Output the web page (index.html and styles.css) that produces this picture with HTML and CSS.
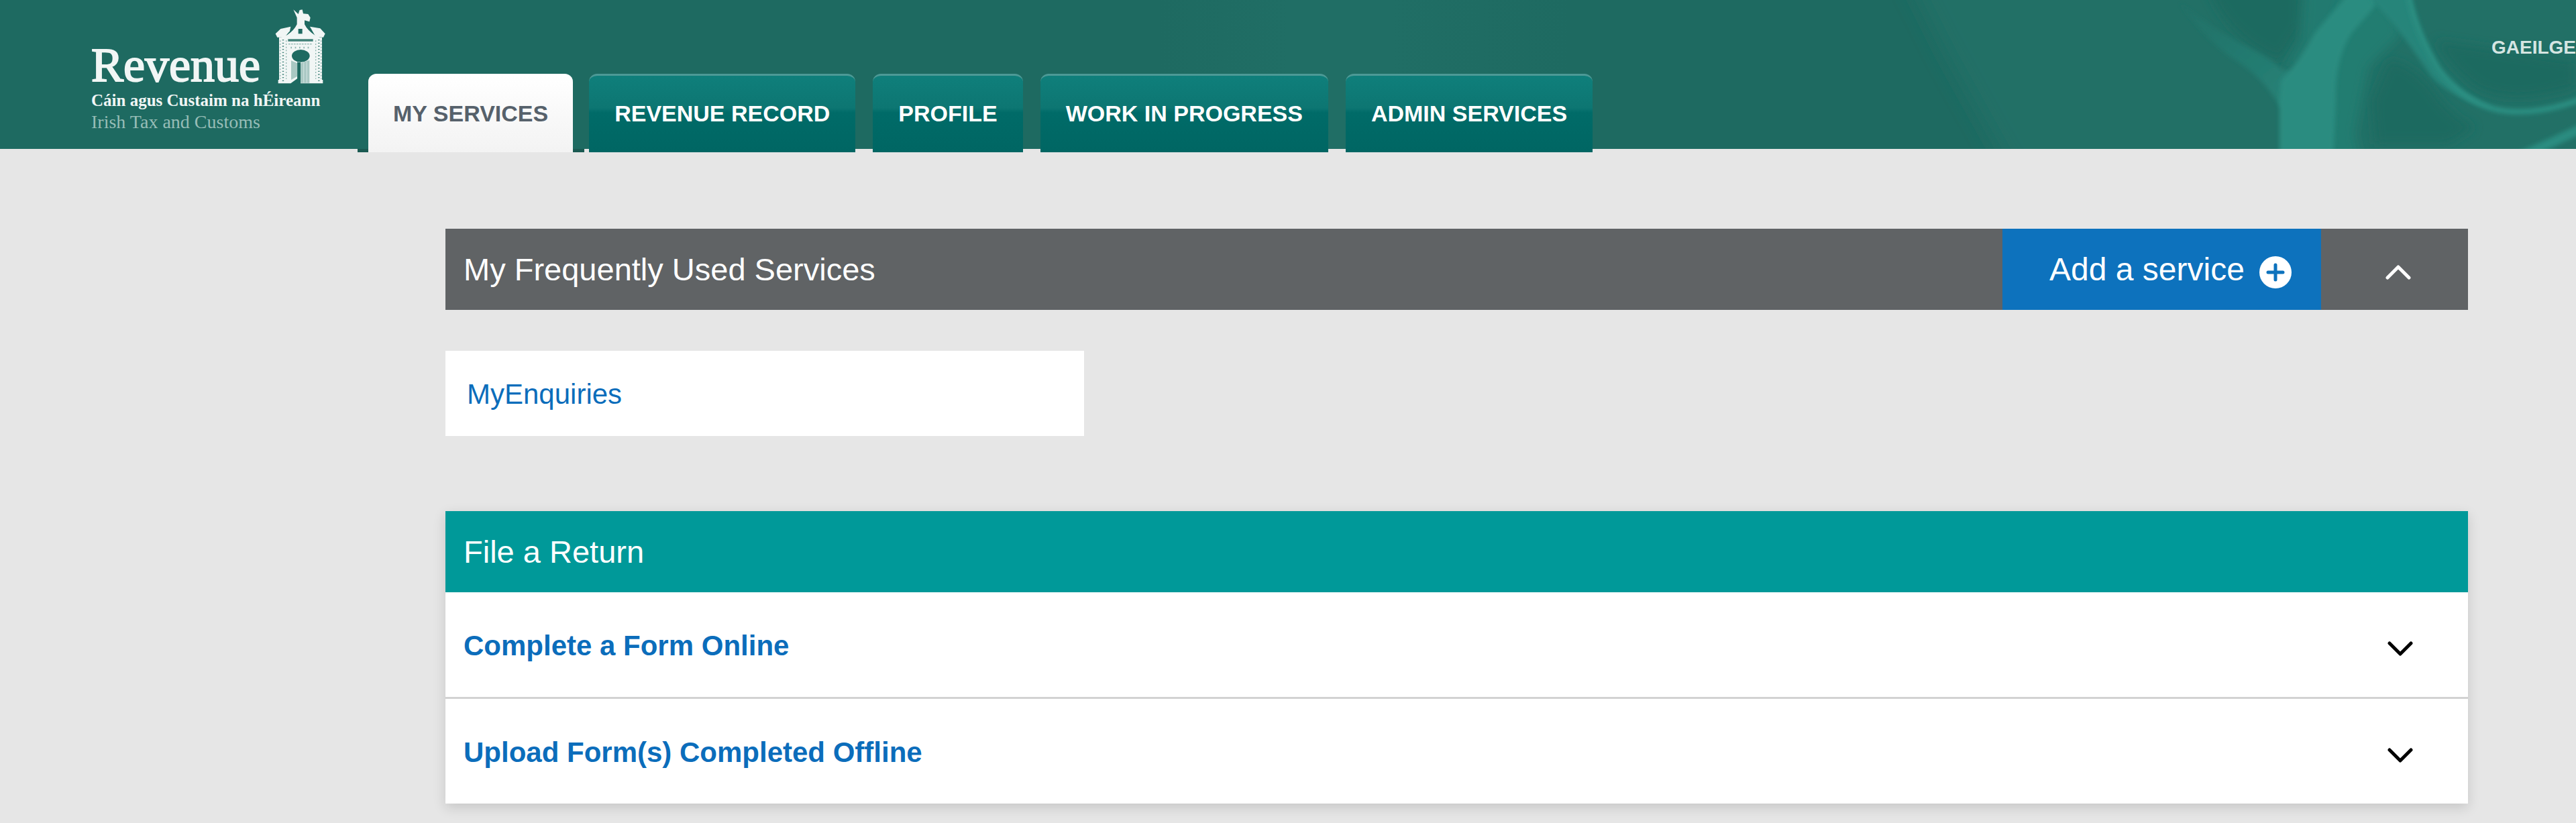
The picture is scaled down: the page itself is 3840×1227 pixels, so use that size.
FILE: index.html
```html
<!DOCTYPE html>
<html lang="en">
<head>
  <meta charset="UTF-8">
  <meta name="viewport" content="width=device-width, initial-scale=1.0">
  <title>Revenue - My Services</title>
  <link rel="stylesheet" href="styles.css">
</head>
<body>

<header>
  <svg class="waves" viewBox="0 0 1440 222" aria-hidden="true">
    <defs>
      <filter id="haze" x="-20%" y="-20%" width="140%" height="140%"><feGaussianBlur stdDeviation="16"/></filter>
      <filter id="soft" x="-20%" y="-20%" width="140%" height="140%"><feGaussianBlur stdDeviation="8"/></filter>
      <filter id="fine" x="-20%" y="-20%" width="140%" height="140%"><feGaussianBlur stdDeviation="3"/></filter>
      <linearGradient id="branch" x1="0" y1="0" x2="1" y2="1">
        <stop offset="0" stop-color="#207067"/>
        <stop offset="1" stop-color="#278478"/>
      </linearGradient>
    </defs>
    <path d="M440-40L500 80 600 260H1500V-40Z" fill="#206f66" filter="url(#haze)"/>
    <path d="M890-20H1030V40L1000 90Q920 60 890-20Z" fill="#1e6a61" filter="url(#soft)"/>
    <path d="M1035-20H1130L1040 90 1000 110 1030 60Z" fill="#237a6f" filter="url(#soft)"/>
    <path d="M1100-20H1150L1180 50 1130 100 1110 200 1120 240H1060V100Z" fill="#247d71" filter="url(#soft)"/>
    <path d="M1160 90Q1190 90 1225 130 1250 170 1290 190L1250 215H1140L1135 150Z" fill="#1e6a61" filter="url(#soft)"/>
    <path d="M1230 60L1440 90V130Q1340 160 1290 130 1255 105 1230 60Z" fill="#1e6a61" filter="url(#soft)"/>
    <path d="M850 5Q900 45 960 75 985 88 1002 104L1040 110 1030 165 998 158Q975 115 925 85 880 50 850 5Z" fill="url(#branch)" filter="url(#fine)"/>
    <path d="M1110-20Q1075 20 1050 50 1030 90 1000 120L998 150V240H1078L1082 150Q1080 90 1105 50L1140 10 1150-20Z" fill="#298c80" filter="url(#fine)"/>
    <path d="M1125-20H1188Q1200 50 1235 105 1265 140 1320 162 1260 150 1225 115 1175 40 1140 5Z" fill="#26857a" filter="url(#fine)"/>
    <path d="M1190-10Q1200 45 1235 103 1270 150 1320 163 1375 175 1450 147" fill="none" stroke="#2a9083" stroke-width="8" filter="url(#fine)"/>
    <path d="M1350 236Q1400 215 1460 186" fill="none" stroke="#298c80" stroke-width="14" filter="url(#fine)"/>
  </svg>

  <a class="logo" href="#">
    <span class="logo-top">
      <span class="logo-name">Revenue</span>
      <svg class="tower" viewBox="930 38 225 336" aria-hidden="true">
        <g fill="#f1f6f5">
          <path d="M1012 42L1034 62 1040 44 1052 42 1056 60 1078 62 1088 78 1084 96 1062 90 1062 108Q1075 135 1110 158L1140 170H948L985 155Q1015 135 1028 108L1028 78Z"/>
          <path d="M932 150L955 128 1000 118 996 138 972 166 940 166Z"/>
          <path d="M1086 118L1132 126 1154 150 1146 166 1112 164Z"/>
          <path d="M948 166H1140V356H1144V372H1044V280L1030 276V350L1000 372H944V356H948Z"/>
        </g>
        <ellipse cx="1045" cy="249" rx="40" ry="28" fill="#1e6a61"/>
        <path d="M1034 128H1052V150H1034Z" fill="#1e6a61"/>
        <path d="M988 174H1100V184H988Z" fill="#3f8077"/>
        <path d="M990 196H1098" stroke="#8db5af" stroke-width="4" stroke-dasharray="8 4"/>
        <path d="M1000 212H1092" stroke="#8db5af" stroke-width="8" stroke-dasharray="5 14"/>
        <path d="M1002 270L1030 282V340L1002 356ZM1044 282L1084 268V370H1044Z" fill="#a9c8c3"/>
        <path d="M1058 280V370M1072 276V370" stroke="#c9dedb" stroke-width="4"/>
        <path d="M966 176V366M1126 176V366" stroke="#3f8077" stroke-width="7" stroke-dasharray="4 10"/>
        <path d="M953 180V352M980 180V352M1112 180V352M1136 180V352" stroke="#8db5af" stroke-width="4" stroke-dasharray="6 8"/>
        <path d="M1030 278H1044V348L1030 356Z" fill="#1e6a61"/>
      </svg>
    </span>
    <span class="logo-irish">Cáin agus Custaim na hÉireann</span>
    <span class="logo-english">Irish Tax and Customs</span>
  </a>

  <nav class="tabs">
    <div class="active-wrap"><a class="tab active" href="#">MY SERVICES</a></div>
    <a class="tab" href="#">REVENUE RECORD</a>
    <a class="tab" href="#">PROFILE</a>
    <a class="tab" href="#">WORK IN PROGRESS</a>
    <a class="tab" href="#">ADMIN SERVICES</a>
  </nav>

  <a class="language" href="#">GAEILGE</a>
</header>

<main>
  <section class="frequent">
    <div class="bar">
      <h2>My Frequently Used Services</h2>
      <button class="add-btn">
        Add a service
        <svg class="plus" viewBox="0 0 48 48" aria-hidden="true">
          <circle cx="24" cy="24" r="24" fill="#fff"/>
          <path d="M24 13V35M13 24H35" stroke="#0d72bd" stroke-width="5" stroke-linecap="round"/>
        </svg>
      </button>
      <button class="collapse-btn" aria-label="Collapse">
        <svg class="chevron" viewBox="0 0 38 22" aria-hidden="true"><path d="M3 19L19 3 35 19"/></svg>
      </button>
    </div>
    <a class="service" href="#">MyEnquiries</a>
  </section>

  <section class="returns">
    <h2>File a Return</h2>
    <button class="row">
      Complete a Form Online
      <svg class="chevron" viewBox="0 0 38 22" aria-hidden="true"><path d="M3 3L19 19 35 3"/></svg>
    </button>
    <button class="row">
      Upload Form(s) Completed Offline
      <svg class="chevron" viewBox="0 0 38 22" aria-hidden="true"><path d="M3 3L19 19 35 3"/></svg>
    </button>
  </section>
</main>

</body>
</html>
```
FILE: styles.css
```css
:root {
  --page-bg: #e6e6e6;
  --header-bg: #1e6a61;
  --bar-bg: #606365;
  --teal: #009999;
  --blue: #0d72bd;
  --link: #0b6dbb;
}
* {
  box-sizing: border-box;
}
body {
  margin: 0;
  font-family: "Liberation Sans", Arial, sans-serif;
  background-color: var(--page-bg);
}
a {
  text-decoration: none;
}
button {
  border: none;
  margin: 0;
  font-family: inherit;
  cursor: pointer;
}
h2 {
  margin: 0;
  padding-left: 27px;
  font-size: 47px;
  font-weight: normal;
  line-height: 121px;
  color: white;
}

/* header */
header {
  position: relative;
  height: 222px;
  display: flex;
  align-items: flex-start;
  background: linear-gradient(90deg, transparent 45%, #206e65 50%, #206e65 54%, transparent 61%) var(--header-bg);
}
.waves {
  position: absolute;
  top: 0;
  right: 0;
  width: 1440px;
  height: 222px;
}
.logo {
  width: 397px;
  margin-left: 136px;
  padding-top: 13px;
  display: flex;
  flex-direction: column;
  font-family: "Liberation Serif", serif;
  white-space: nowrap;
  color: #f1f6f5;
}
.logo-top {
  display: flex;
  align-items: flex-end;
  gap: 20px;
  height: 112px;
}
.logo-name {
  width: 254px;
  font-size: 72px;
  line-height: 56px;
  -webkit-text-stroke: 2px #f1f6f5;
}
.tower {
  width: 75px;
  height: 112px;
}
.logo-irish {
  margin-top: 9px;
  font-size: 25px;
  font-weight: bold;
  line-height: 32px;
}
.logo-english {
  font-size: 28px;
  line-height: 32px;
  color: #97bdb7;
}
.tabs {
  display: flex;
  margin-top: 110px;
  gap: 26px;
  z-index: 1;
}
.active-wrap {
  margin-right: -19px;
  padding: 0 17px 0 16px;
  background: linear-gradient(transparent 112px, #1a5a52 112px);
}
.tab {
  display: block;
  height: 117px;
  padding: 0 38px;
  border-top: 3px solid #4d9a96;
  border-radius: 12px 12px 0 0;
  font-size: 34px;
  font-weight: bold;
  line-height: 112px;
  white-space: nowrap;
  color: white;
  background: linear-gradient(#0f7f7b, #0d7672 42%, #006b68 48%, #006663);
}
.tab.active {
  padding: 0 37px;
  border-top-color: white;
  color: #56616b;
  background: linear-gradient(white, #f3f3f3);
}
.language {
  margin-left: auto;
  padding-top: 54px;
  font-size: 28px;
  font-weight: bold;
  line-height: 34px;
  color: #d5e5e2;
  z-index: 1;
}

/* content */
main {
  margin: 119px 161px 28px 664px;
}
.bar {
  display: flex;
  height: 121px;
  background-color: var(--bar-bg);
}
.bar h2 {
  flex: 1;
}
.add-btn {
  width: 475px;
  padding: 0 0 0 26px;
  display: flex;
  align-items: center;
  justify-content: center;
  gap: 22px;
  font-size: 48px;
  color: white;
  background-color: var(--blue);
}
.plus {
  width: 48px;
  height: 48px;
  margin-top: 8px;
}
.collapse-btn {
  width: 219px;
  padding: 0 0 0 10px;
  display: flex;
  align-items: center;
  justify-content: center;
  background: none;
}
.chevron {
  width: 38px;
  height: 22px;
  margin-top: 8px;
  fill: none;
  stroke: black;
  stroke-width: 5;
  stroke-linecap: round;
  stroke-linejoin: round;
}
.collapse-btn .chevron {
  stroke: white;
}
.service {
  display: block;
  width: 952px;
  margin-top: 61px;
  padding: 2px 0 0 32px;
  font-size: 42px;
  line-height: 125px;
  color: var(--link);
  background-color: white;
}
.returns {
  margin-top: 112px;
  background-color: white;
  box-shadow: 0 6px 18px rgba(0, 0, 0, 0.14);
}
.returns h2 {
  background-color: var(--teal);
}
.row {
  width: 100%;
  height: 156px;
  padding: 4px 82px 0 27px;
  display: flex;
  align-items: center;
  justify-content: space-between;
  font-size: 42px;
  font-weight: bold;
  color: var(--link);
  background-color: white;
}
.row + .row {
  height: 159px;
  border-top: 3px solid #d2d2d2;
}
```
